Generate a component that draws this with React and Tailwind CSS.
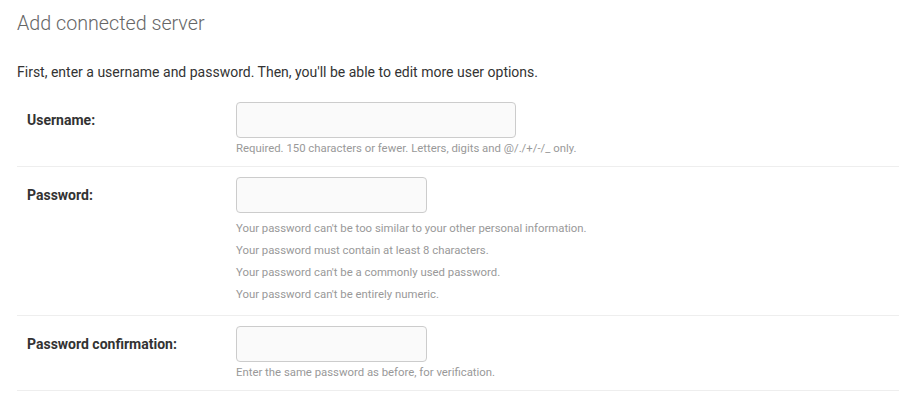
export default function App() {
  const help = "text-[11.35px] leading-[16px] text-[#999]";
  return (
    <div className="min-h-[416px] bg-white pl-[17px] pr-[15px] pt-[12px]" style={{ fontFamily: "Roboto, 'Liberation Sans', sans-serif" }}>
      <h1 className="text-[19.7px] leading-[24px] font-light text-[#666]">Add connected server</h1>
      <p className="mt-[26px] text-[14px] leading-[20px] text-[#333]">
        First, enter a username and password. Then, you'll be able to edit more user options.
      </p>
      <div className="mt-[10px]">
        <div className="flex border-b border-[#eee] p-[10px]">
          <label className="w-[209px] shrink-0 pt-[9px] text-[14px] leading-[18px] font-bold text-[#333]">Username:</label>
          <div className="flex flex-col">
            <div className="h-[36px] w-[280px] rounded-[4px] border border-[#ccc] bg-[#fafafa]"></div>
            <div className={`${help} mt-[2px]`}>Required. 150 characters or fewer. Letters, digits and @/./+/-/_ only.</div>
          </div>
        </div>
        <div className="flex border-b border-[#eee] p-[10px]">
          <label className="w-[209px] shrink-0 pt-[9px] text-[14px] leading-[18px] font-bold text-[#333]">Password:</label>
          <div className="flex flex-col">
            <div className="h-[36px] w-[191px] rounded-[4px] border border-[#ccc] bg-[#fafafa]"></div>
            <ul className={`${help} mt-[4px]`}>
              <li className="py-[3px]">Your password can't be too similar to your other personal information.</li>
              <li className="py-[3px]">Your password must contain at least 8 characters.</li>
              <li className="py-[3px]">Your password can't be a commonly used password.</li>
              <li className="py-[3px]">Your password can't be entirely numeric.</li>
            </ul>
          </div>
        </div>
        <div className="flex border-b border-[#eee] p-[10px]">
          <label className="w-[209px] shrink-0 pt-[9px] text-[14px] leading-[18px] font-bold text-[#333]">Password confirmation:</label>
          <div className="flex flex-col">
            <div className="h-[36px] w-[191px] rounded-[4px] border border-[#ccc] bg-[#fafafa]"></div>
            <div className={`${help} mt-[2px]`}>Enter the same password as before, for verification.</div>
          </div>
        </div>
      </div>
    </div>
  );
}
